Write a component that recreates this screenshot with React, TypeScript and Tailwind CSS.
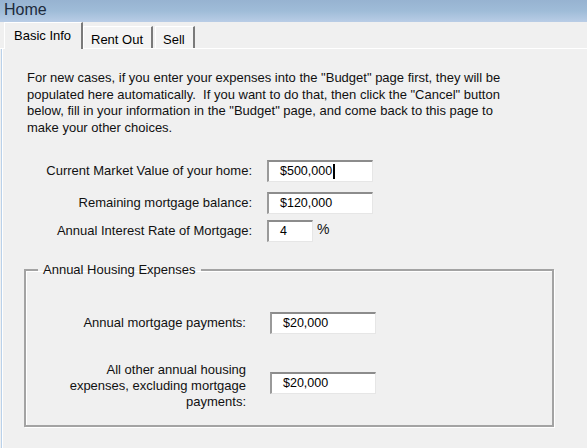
import React from 'react';

const font = { fontFamily: '"Liberation Sans", Arial, sans-serif' };

function Field({ value, width = 'w-[106px]', caret = false }: { value: string; width?: string; caret?: boolean }) {
  return (
    <div
      className={`${width} h-[22px] bg-white border-t-2 border-l-2 border-r border-b border-t-[#8c8c8c] border-l-[#9a9a9a] border-r-[#e6e6e6] border-b-[#e6e6e6] flex items-center pl-[11px] text-[12.5px] text-black`}
    >
      <span>{value}</span>
      {caret && <span className="inline-block w-[2px] h-[15px] bg-black ml-[1px]" />}
    </div>
  );
}

function Tab({ label, active = false }: { label: string; active?: boolean }) {
  if (active) {
    return (
      <div className="relative z-10 h-[27px] w-[79px] -mb-[1px] bg-[#f0f0f0] border-t border-l border-t-white border-l-white border-r-2 border-r-[#7a7a7a] pl-[9px] pt-[3px] text-[13px] text-black">
        {label}
      </div>
    );
  }
  return (
    <div className="h-[22px] bg-[#f4f4f4] border-t border-l border-t-white border-l-white border-r-2 border-r-[#7a7a7a] pl-[7px] pr-[8px] pt-[3px] text-[13px] text-black mr-[2px]">
      {label}
    </div>
  );
}

export default function App() {
  return (
    <div className="w-[587px] h-[448px] bg-[#f0f0f0] overflow-hidden" style={font}>
      {/* title bar */}
      <div className="h-[22px] bg-gradient-to-b from-[#97b3d1] via-[#9fbcd8] to-[#b9cde6] pl-[4px] text-[16px] leading-[20px] text-[#1d2b3c]">
        Home
      </div>

      {/* tab strip */}
      <div className="flex items-end h-[27px] pl-[4px] border-b border-b-white">
        <Tab label="Basic Info" active />
        <Tab label="Rent Out" />
        <Tab label="Sell" />
      </div>

      {/* page */}
      <div className="ml-[1px] h-[399px] border-l border-l-[#b9d1ea] shadow-[inset_1px_0_0_#ffffff]">
        <p className="pt-[21px] pl-[25px] w-[520px] text-[13px] leading-[16.7px] text-[#111111]">
          For new cases, if you enter your expenses into the "Budget" page first, they will be populated here automatically.&nbsp; If you want to do that, then click the "Cancel" button below, fill in your information in the "Budget" page, and come back to this page to make your other choices.
        </p>

        <div className="flex items-center mt-[23px]">
          <div className="w-[250px] text-right text-[13px] text-[#111111]">Current Market Value of your home:</div>
          <div className="ml-[15px]">
            <Field value="$500,000" caret />
          </div>
        </div>

        <div className="flex items-center mt-[10px]">
          <div className="w-[250px] text-right text-[13px] text-[#111111]">Remaining mortgage balance:</div>
          <div className="ml-[15px]">
            <Field value="$120,000" />
          </div>
        </div>

        <div className="flex items-center mt-[6px]">
          <div className="w-[250px] text-right text-[13px] text-[#111111]">Annual Interest Rate of Mortgage:</div>
          <div className="ml-[15px]">
            <Field value="4" width="w-[46px]" />
          </div>
          <span className="ml-[4px] -mt-[3px] text-[14px] text-[#111111]">%</span>
        </div>

        <fieldset className="ml-[22px] mt-[20px] w-[530px] h-[165px] border-2 border-[#a3a3a3] shadow-[inset_1px_1px_0_#ffffff,1px_1px_0_#ffffff]">
          <legend className="ml-[12px] px-[5px] text-[13px] leading-[16px] text-[#111111]">Annual Housing Expenses</legend>

          <div className="flex items-center mt-[34px]">
            <div className="w-[220px] text-right text-[13px] text-[#111111]">Annual mortgage payments:</div>
            <div className="ml-[24px]">
              <Field value="$20,000" />
            </div>
          </div>

          <div className="flex items-center mt-[28px]">
            <div className="w-[220px] text-right text-[13px] leading-[16px] text-[#111111]">
              All other annual housing
              <br />
              expenses, excluding mortgage
              <br />
              payments:
            </div>
            <div className="ml-[24px] -mt-[6px]">
              <Field value="$20,000" />
            </div>
          </div>
        </fieldset>
      </div>
    </div>
  );
}
